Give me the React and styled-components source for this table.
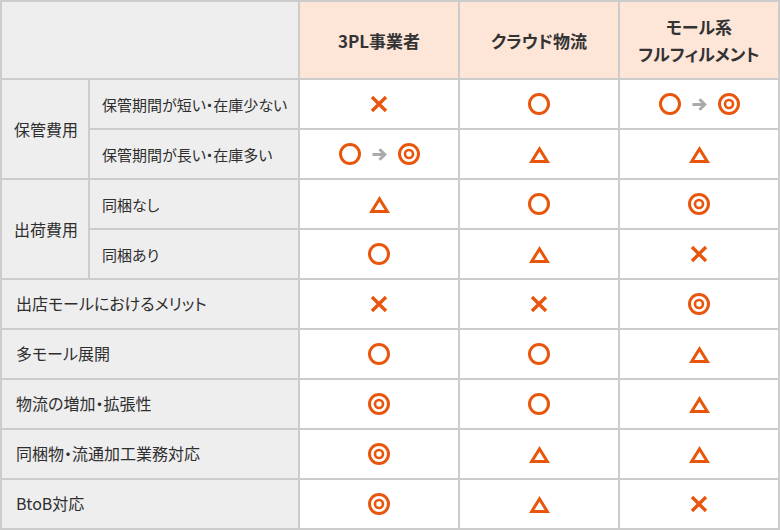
import React from "react";
import styled, { createGlobalStyle } from "styled-components";

const Global = createGlobalStyle`
  html, body { margin: 0; padding: 0; background: #ffffff; }
  body { font-family: "Noto Sans CJK JP", "Noto Sans", sans-serif; color: #333333; }
`;

const ORANGE = "#e8560c";

const Table = styled.div`
  display: grid;
  grid-template-columns: 86px 208px repeat(3, 158px);
  grid-template-rows: 76px repeat(9, 48px);
  gap: 2px;
  padding: 2px;
  width: 780px;
  box-sizing: border-box;
  background: #cccccc;
  font-feature-settings: "palt";
`;

const Corner = styled.div`
  grid-column: span 2;
  background: #eeeeee;
`;

const HeadCell = styled.div`
  background: #fde5d8;
  display: flex;
  align-items: center;
  justify-content: center;
  text-align: center;
  font-size: 17px;
  font-weight: 700;
  line-height: 27px;
  color: #333333;
`;

const Label = styled.div`
  background: #eeeeee;
  display: flex;
  align-items: center;
  color: #2e2e2e;
  font-weight: 400;
  font-size: ${(p) => p.$size}px;
  padding-left: ${(p) => p.$pad}px;
  padding-bottom: ${(p) => p.$lift || 0}px;
  grid-column: span ${(p) => p.$cols || 1};
  grid-row: span ${(p) => p.$rows || 1};
  white-space: nowrap;
`;

const ValueCell = styled.div`
  background: #ffffff;
  display: flex;
  align-items: center;
  justify-content: center;
  gap: 11px;
`;

const Svg = styled.svg`
  display: block;
  flex: none;
`;

function Mark({ type }) {
  if (type === "o")
    return (
      <Svg width="22" height="22" viewBox="0 0 22 22">
        <circle cx="11" cy="11" r="9.5" fill="none" stroke={ORANGE} strokeWidth="3" />
      </Svg>
    );
  if (type === "oo")
    return (
      <Svg width="22" height="22" viewBox="0 0 22 22">
        <circle cx="11" cy="11" r="9.5" fill="none" stroke={ORANGE} strokeWidth="3" />
        <circle cx="11" cy="11" r="4" fill="none" stroke={ORANGE} strokeWidth="2.6" />
      </Svg>
    );
  if (type === "t")
    return (
      <Svg width="21" height="17" viewBox="0 0 21 17">
        <path
          d="M10.5 0 L21 17 L0 17 Z M10.5 5.7 L15.62 14 L5.38 14 Z"
          fill={ORANGE}
          fillRule="evenodd"
        />
      </Svg>
    );
  if (type === "x")
    return (
      <Svg width="18" height="18" viewBox="0 0 18 18">
        <path d="M2 2 L16 16 M16 2 L2 16" stroke={ORANGE} strokeWidth="3.3" />
      </Svg>
    );
  return null;
}

function Arrow() {
  return (
    <Svg width="15" height="13" viewBox="0 0 15 13">
      <path d="M0.5 6.5 H13" stroke="#aaaaaa" strokeWidth="3" fill="none" />
      <path d="M7.5 1.2 L12.8 6.5 L7.5 11.8" stroke="#aaaaaa" strokeWidth="3" fill="none" />
    </Svg>
  );
}

function Value({ v }) {
  if (v.includes(">")) {
    const [a, b] = v.split(">");
    return (
      <ValueCell>
        <Mark type={a} />
        <Arrow />
        <Mark type={b} />
      </ValueCell>
    );
  }
  return (
    <ValueCell>
      <Mark type={v} />
    </ValueCell>
  );
}

const groups = [
  {
    group: "保管費用",
    rows: [
      { label: "保管期間が短い・在庫少ない", values: ["x", "o", "o>oo"] },
      { label: "保管期間が長い・在庫多い", values: ["o>oo", "t", "t"] },
    ],
  },
  {
    group: "出荷費用",
    rows: [
      { label: "同梱なし", values: ["t", "o", "oo"] },
      { label: "同梱あり", values: ["o", "t", "x"] },
    ],
  },
  { label: "出店モールにおけるメリット", values: ["x", "x", "oo"] },
  { label: "多モール展開", values: ["o", "o", "t"] },
  { label: "物流の増加・拡張性", values: ["oo", "o", "t"] },
  { label: "同梱物・流通加工業務対応", values: ["oo", "t", "t"] },
  { label: "BtoB対応", values: ["oo", "t", "x"] },
];

export default function App() {
  return (
    <>
      <Global />
      <Table>
        <Corner />
        <HeadCell>3PL事業者</HeadCell>
        <HeadCell>クラウド物流</HeadCell>
        <HeadCell>
          モール系
          <br />
          フルフィルメント
        </HeadCell>
        {groups.map((g, gi) =>
          g.group ? (
            <React.Fragment key={gi}>
              <Label $size={16} $pad={12} $rows={g.rows.length}>
                {g.group}
              </Label>
              {g.rows.map((r, ri) => (
                <React.Fragment key={ri}>
                  <Label $size={15} $pad={12}>
                    {r.label}
                  </Label>
                  {r.values.map((v, vi) => (
                    <Value key={vi} v={v} />
                  ))}
                </React.Fragment>
              ))}
            </React.Fragment>
          ) : (
            <React.Fragment key={gi}>
              <Label $size={16} $pad={14} $cols={2} $lift={3}>
                {g.label}
              </Label>
              {g.values.map((v, vi) => (
                <Value key={vi} v={v} />
              ))}
            </React.Fragment>
          )
        )}
      </Table>
    </>
  );
}
